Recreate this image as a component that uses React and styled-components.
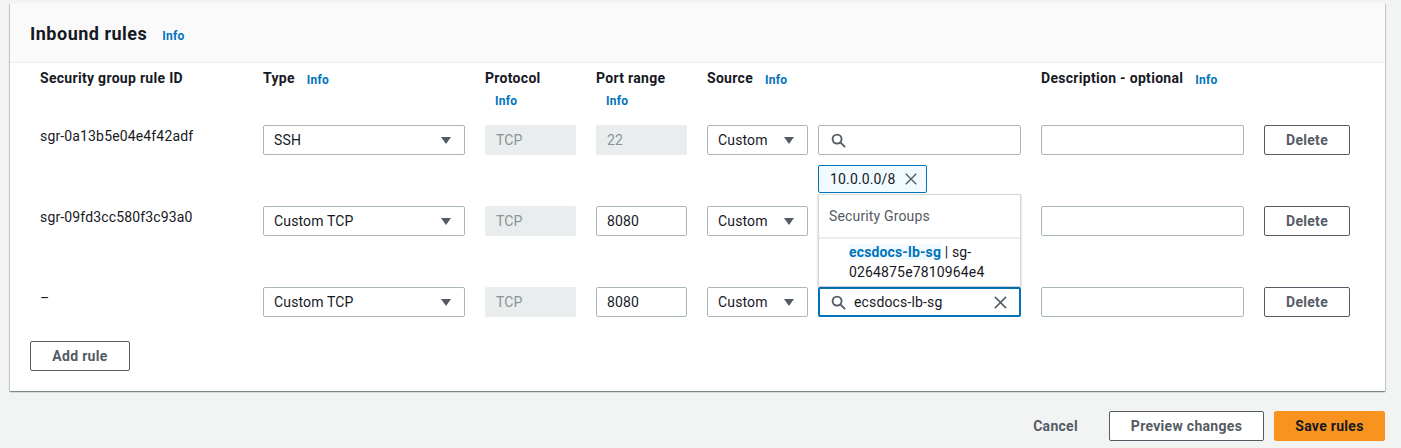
import React from "react";
import styled, { createGlobalStyle } from "styled-components";

const GlobalStyle = createGlobalStyle`
  body {
    margin: 0;
    background: #f2f3f3;
    font-family: Roboto, "Liberation Sans", sans-serif;
    color: #16191f;
    font-size: 14px;
    letter-spacing: 0.15px;
  }
`;

const rules = [
  { id: "sgr-0a13b5e04e4f42adf", type: "SSH", port: "22", portDisabled: true, search: "", token: "10.0.0.0/8" },
  { id: "sgr-09fd3cc580f3c93a0", type: "Custom TCP", port: "8080" },
  { id: "–", type: "Custom TCP", port: "8080", search: "ecsdocs-lb-sg", focused: true, menu: true },
];

function SearchIcon() {
  return (
    <svg width="15" height="15" viewBox="0 0 16 16" fill="none" stroke="#545b64" strokeWidth="2">
      <circle cx="6.5" cy="6.5" r="4.8" />
      <path d="M10 10l4.5 4.5" strokeLinecap="round" />
    </svg>
  );
}

function CloseIcon({ size = 14 }) {
  return (
    <svg width={size} height={size} viewBox="0 0 16 16" fill="none" stroke="#545b64" strokeWidth="1.6">
      <path d="M2 2l12 12M14 2L2 14" />
    </svg>
  );
}

function App() {
  return (
    <>
      <GlobalStyle />
      <Page>
        <Panel>
          <PanelHeader>
            <Title>Inbound rules</Title>
            <InfoLink $title>Info</InfoLink>
          </PanelHeader>
          <PanelBody>
            <HeaderRow>
              <HeadCell>Security group rule ID</HeadCell>
              <HeadCell>
                Type<InfoLink>Info</InfoLink>
              </HeadCell>
              <HeadCell>
                Protocol<InfoLink $wrap>Info</InfoLink>
              </HeadCell>
              <HeadCell>
                Port range<InfoLink $wrap>Info</InfoLink>
              </HeadCell>
              <HeadCell>
                Source<InfoLink>Info</InfoLink>
              </HeadCell>
              <HeadCell>
                Description - optional<InfoLink>Info</InfoLink>
              </HeadCell>
              <HeadCell />
            </HeaderRow>

            {rules.map((r, i) => (
              <RuleRow key={i}>
                <IdText>{r.id}</IdText>
                <Select>
                  <span>{r.type}</span>
                  <Caret />
                </Select>
                <Field $disabled>TCP</Field>
                <Field $disabled={r.portDisabled}>{r.port}</Field>
                <SourceCell>
                  <SourceRow>
                    <Select>
                      <span>Custom</span>
                      <Caret />
                    </Select>
                    <SearchBox $focused={r.focused}>
                      <SearchIcon />
                      <SearchText>{r.search}</SearchText>
                      {r.search && <CloseIcon size={15} />}
                    </SearchBox>
                  </SourceRow>
                  {r.token && (
                    <Token>
                      {r.token}
                      <CloseIcon size={14} />
                    </Token>
                  )}
                  {r.menu && (
                    <Menu>
                      <MenuGroup>Security Groups</MenuGroup>
                      <MenuOption>
                        <Match>ecsdocs-lb-sg</Match> | sg-0264875e7810964e4
                      </MenuOption>
                    </Menu>
                  )}
                </SourceCell>
                <Field />
                <Button>Delete</Button>
              </RuleRow>
            ))}

            <Button $narrow>Add rule</Button>
          </PanelBody>
        </Panel>

        <Footer>
          <LinkButton>Cancel</LinkButton>
          <Button $wide>Preview changes</Button>
          <PrimaryButton>Save rules</PrimaryButton>
        </Footer>
      </Page>
    </>
  );
}

export default App;

const Page = styled.div`
  padding: 3px 16px 0 10px;
`;

const Panel = styled.section`
  background: #fff;
  box-shadow: 0 1px 1px 0 rgba(0, 28, 36, 0.3), 1px 1px 1px 0 rgba(0, 28, 36, 0.15),
    -1px 1px 1px 0 rgba(0, 28, 36, 0.15);
`;

const PanelHeader = styled.div`
  display: flex;
  align-items: center;
  height: 59px;
  padding: 0 20px;
  background: #fafafa;
  border-bottom: 1px solid #eaeded;
`;

const Title = styled.h2`
  margin: 0;
  font-size: 18px;
  font-weight: 700;
  line-height: 22px;
  letter-spacing: 0.5px;
  color: #16191f;
  position: relative;
  top: 1px;
`;

const InfoLink = styled.a`
  display: ${(p) => (p.$wrap ? "block" : "inline-block")};
  margin-left: ${(p) => (p.$wrap ? "10px" : p.$title ? "15px" : "12px")};
  font-size: 12px;
  font-weight: 700;
  letter-spacing: 0.2px;
  color: #0073bb;
  cursor: pointer;
  position: relative;
  top: ${(p) => (p.$title ? "3px" : "1px")};
`;

const PanelBody = styled.div`
  padding: 4px 20px 20px 20px;
`;

const Grid = styled.div`
  display: grid;
  grid-template-columns: 203px 202px 91px 91px 314px 203px 86px;
  column-gap: 20px;
  padding-left: 10px;
`;

const HeaderRow = styled(Grid)`
  margin-bottom: 14px;
  min-height: 44px;
`;

const HeadCell = styled.div`
  font-weight: 700;
  line-height: 22px;
  letter-spacing: 0.3px;
  color: #16191f;
  white-space: nowrap;
`;

const RuleRow = styled(Grid)`
  min-height: 81px;
  align-items: start;

  &:nth-last-of-type(1) {
    min-height: 0;
  }
`;

const IdText = styled.div`
  line-height: 22px;
  color: #16191f;
`;

const Select = styled.div`
  display: flex;
  align-items: center;
  justify-content: space-between;
  height: 30px;
  box-sizing: border-box;
  padding: 0 13px 0 10px;
  border: 1px solid #aab7b8;
  border-radius: 2px;
  background: #fff;
  color: #16191f;
`;

const Caret = styled.span`
  width: 0;
  height: 0;
  border-left: 5px solid transparent;
  border-right: 5px solid transparent;
  border-top: 7px solid #545b64;
`;

const Field = styled.div`
  display: flex;
  align-items: center;
  height: 30px;
  box-sizing: border-box;
  padding: 0 10px;
  border: 1px solid ${(p) => (p.$disabled ? "#eaeded" : "#aab7b8")};
  border-radius: 2px;
  background: ${(p) => (p.$disabled ? "#eaeded" : "#fff")};
  color: ${(p) => (p.$disabled ? "#879596" : "#16191f")};
`;

const SourceCell = styled.div`
  position: relative;
  display: flex;
  flex-direction: column;
`;

const SourceRow = styled.div`
  display: grid;
  grid-template-columns: 101px 203px;
  column-gap: 10px;
`;

const SearchBox = styled.div`
  display: flex;
  align-items: center;
  gap: 8px;
  height: 30px;
  box-sizing: border-box;
  padding: 0 ${(p) => (p.$focused ? "11px" : "12px")};
  border: ${(p) => (p.$focused ? "2px solid #0073bb" : "1px solid #aab7b8")};
  border-radius: 2px;
  background: #fff;
`;

const SearchText = styled.span`
  flex: 1;
  color: #16191f;
`;

const Token = styled.div`
  align-self: flex-start;
  margin-left: 111px;
  margin-top: 10px;
  display: flex;
  align-items: center;
  gap: 8px;
  height: 28px;
  box-sizing: border-box;
  padding: 0 8px 0 11px;
  background: #f1faff;
  border: 1px solid #0073bb;
  border-radius: 2px;
  color: #16191f;
`;

const Menu = styled.div`
  position: absolute;
  left: 111px;
  bottom: calc(100% + 1px);
  width: 203px;
  box-sizing: border-box;
  background: #fff;
  border: 1px solid #d5dbdb;
  border-bottom: none;
  box-shadow: 0 1px 2px rgba(0, 28, 36, 0.3);
  z-index: 2;
`;

const MenuGroup = styled.div`
  padding: 10px;
  line-height: 22px;
  color: #545b64;
  border-bottom: 2px solid #eaeded;
`;

const MenuOption = styled.div`
  padding: 3px 10px 4px 30px;
  line-height: 20px;
  color: #16191f;
`;

const Match = styled.span`
  font-weight: 700;
  color: #0073bb;
  background: #f1faff;
`;

const Button = styled.button`
  height: 30px;
  width: ${(p) => (p.$narrow ? "100px" : p.$wide ? "155px" : "86px")};
  box-sizing: border-box;
  border: 1px solid #545b64;
  border-radius: 2px;
  background: #fff;
  color: #545b64;
  font-family: inherit;
  font-size: 14px;
  font-weight: 700;
  letter-spacing: 0.3px;
  cursor: pointer;
  ${(p) => p.$narrow && "margin-top: 24px;"}
`;

const Footer = styled.div`
  display: flex;
  justify-content: flex-end;
  align-items: center;
  gap: 10px;
  margin-top: 20px;
`;

const LinkButton = styled.button`
  height: 30px;
  padding: 0 21px;
  border: none;
  background: none;
  color: #545b64;
  font-family: inherit;
  font-size: 14px;
  font-weight: 700;
  letter-spacing: 0.3px;
  cursor: pointer;
`;

const PrimaryButton = styled.button`
  height: 30px;
  width: 111px;
  border: 1px solid #f7931e;
  border-radius: 2px;
  background: #f7931e;
  color: #16191f;
  font-family: inherit;
  font-size: 14px;
  font-weight: 700;
  letter-spacing: 0.3px;
  cursor: pointer;
`;
